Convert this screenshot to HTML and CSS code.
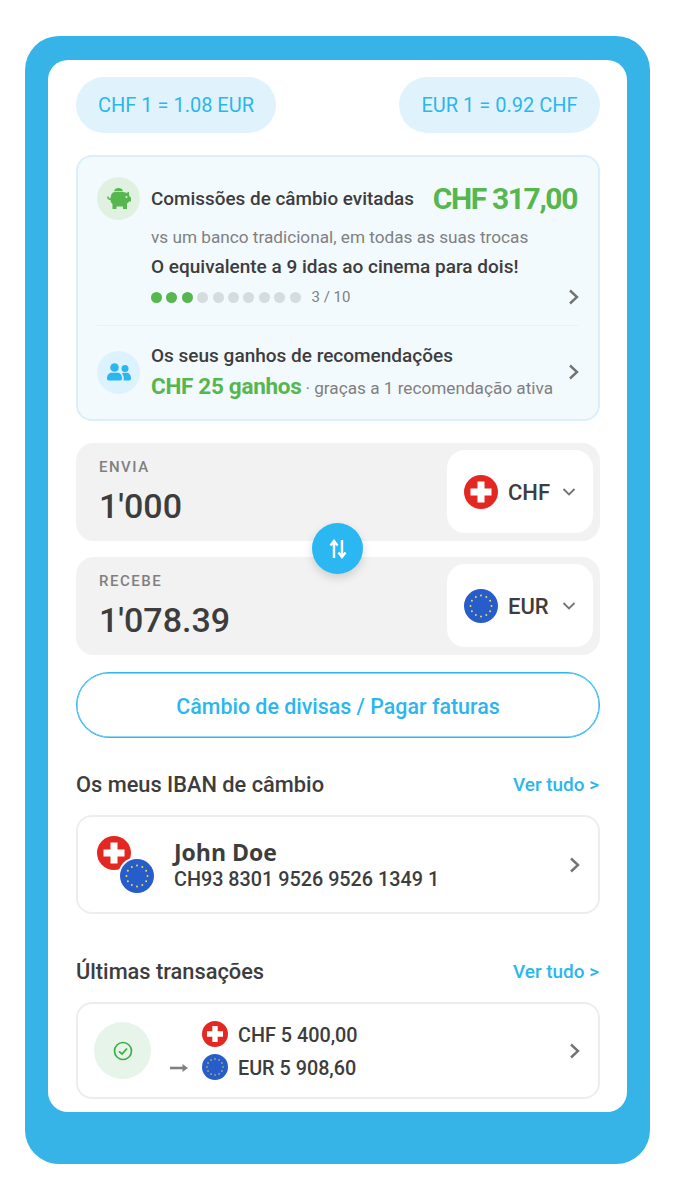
FILE: index.html
```html
<!DOCTYPE html>
<html lang="pt">
<head>
    <meta charset="UTF-8">
    <meta name="viewport" content="width=device-width, initial-scale=1.0">
    <title>Câmbio</title>
    <link rel="stylesheet" href="styles.css">
</head>
<body>
    <svg class="defs" width="0" height="0">
        <symbol id="flag-chf" viewBox="0 0 34 34">
            <circle cx="17" cy="17" r="17" fill="#e32822"/>
            <path d="M13.500 6.500h7v7h7v7h-7v7h-7v-7h-7v-7h7z" fill="#fff"/>
        </symbol>
        <symbol id="flag-eur" viewBox="0 0 34 34">
            <circle cx="17" cy="17" r="17" fill="#275ccb"/>
            <g fill="#ecdf3a">
                <circle cx="17" cy="6.500" r="1"/><circle cx="22.300" cy="7.900" r="1"/><circle cx="26.100" cy="11.800" r="1"/>
                <circle cx="27.500" cy="17" r="1"/><circle cx="26.100" cy="22.300" r="1"/><circle cx="22.300" cy="26.100" r="1"/>
                <circle cx="17" cy="27.500" r="1"/><circle cx="11.800" cy="26.100" r="1"/><circle cx="7.900" cy="22.300" r="1"/>
                <circle cx="6.500" cy="17" r="1"/><circle cx="7.900" cy="11.800" r="1"/><circle cx="11.800" cy="7.900" r="1"/>
            </g>
        </symbol>
        <symbol id="chevron" viewBox="0 0 14 18">
            <path d="M3 2.500 10 9l-7 6.500" fill="none" stroke="#737373" stroke-width="2.400"/>
        </symbol>
        <symbol id="chevron-down" viewBox="0 0 14 10">
            <path d="M1.500 2 7 7.500 12.500 2" fill="none" stroke="#737373" stroke-width="1.800"/>
        </symbol>
    </svg>

    <div class="frame">
        <div class="screen">
            <div class="rates">
                <div class="rate">CHF 1 = 1.08 EUR</div>
                <div class="rate wide">EUR 1 = 0.92 CHF</div>
            </div>

            <div class="summary">
                <div class="savings">
                    <div class="savings-head">
                        <div class="round-icon green">
                            <svg width="24" height="21" viewBox="0 0 24 21">
                                <path d="M7 3.300C7.500 1 9.300 0 11.500 0S15.500 1 16 3.300z" fill="#55b74e"/>
                                <path d="M8 4h8c1.300 0 2.400.3 3.300.9L22 3.800v3.500c.5.500.9 1.200 1.100 1.900H24v4.300h-1.800c-.5.800-1.200 1.500-2.200 2V21h-4v-2.500H9.500V21h-4v-5c-1.300-1.100-2-2.600-2-4.300C3.500 7 5 4 8 4z" fill="#55b74e"/>
                                <path d="M4 11C2 11.500.8 10.500 1 8.500" fill="none" stroke="#55b74e" stroke-width="1.600"/>
                                <circle cx="19.500" cy="9" r="1" fill="#e0f1e1"/>
                            </svg>
                        </div>
                        <div class="savings-title">Comissões de câmbio evitadas</div>
                        <div class="savings-amount">CHF 317,00</div>
                    </div>
                    <div class="savings-body">
                        <div class="muted">vs um banco tradicional, em todas as suas trocas</div>
                        <div class="equivalent">O equivalente a 9 idas ao cinema para dois!</div>
                        <div class="progress">
                            <div class="dots">
                                <span class="dot on"></span><span class="dot on"></span><span class="dot on"></span>
                                <span class="dot"></span><span class="dot"></span><span class="dot"></span><span class="dot"></span>
                                <span class="dot"></span><span class="dot"></span><span class="dot"></span>
                            </div>
                            <span class="count">3 / 10</span>
                            <svg class="chevron" width="14" height="18"><use href="#chevron"/></svg>
                        </div>
                    </div>
                </div>
                <div class="referral">
                    <div class="round-icon blue">
                        <svg width="24" height="18" viewBox="0 0 24 18">
                            <circle cx="7.500" cy="4.500" r="4.300" fill="#2bb6f0"/>
                            <circle cx="18" cy="5.500" r="3.500" fill="#2bb6f0"/>
                            <path d="M0 15.500C0 11.500 2.500 9.800 4.500 9.800h6c2.500 0 4.500 2 4.500 5.700 0 1.200-.7 2-1.800 2H1.800C.7 17.500 0 16.700 0 15.500z" fill="#2bb6f0"/>
                            <path d="M16.500 17.500c.3-.6.3-1.300.3-2 0-2-.7-3.800-1.900-5 .7-.5 1.500-.7 2.300-.7h2.300c2.400 0 4.500 2 4.500 5.400 0 1.400-.8 2.300-1.900 2.300z" fill="#2bb6f0"/>
                        </svg>
                    </div>
                    <div class="referral-text">
                        <div class="referral-title">Os seus ganhos de recomendações</div>
                        <div class="referral-line"><span class="referral-amount">CHF 25 ganhos</span> <span class="referral-note">· graças a 1 recomendação ativa</span></div>
                    </div>
                    <svg class="chevron" width="14" height="18"><use href="#chevron"/></svg>
                </div>
            </div>

            <div class="converter">
                <div class="amount-box">
                    <div class="amount-left">
                        <div class="amount-label">ENVIA</div>
                        <div class="amount-value">1'000</div>
                    </div>
                    <div class="currency">
                        <svg width="34" height="34"><use href="#flag-chf"/></svg>
                        <span class="currency-code">CHF</span>
                        <svg width="14" height="10"><use href="#chevron-down"/></svg>
                    </div>
                </div>
                <div class="amount-box">
                    <div class="amount-left">
                        <div class="amount-label">RECEBE</div>
                        <div class="amount-value">1'078.39</div>
                    </div>
                    <div class="currency">
                        <svg width="34" height="34"><use href="#flag-eur"/></svg>
                        <span class="currency-code">EUR</span>
                        <svg width="14" height="10"><use href="#chevron-down"/></svg>
                    </div>
                </div>
                <div class="swap">
                    <svg width="18" height="20" viewBox="0 0 18 20">
                        <path d="M5 19V3M1.500 6.500 5 2l3.500 4.500" fill="none" stroke="#fff" stroke-width="2.400"/>
                        <path d="M13 1v16M9.500 13.500 13 18l3.500-4.500" fill="none" stroke="#fff" stroke-width="2.400"/>
                    </svg>
                </div>
            </div>

            <div class="main-button">Câmbio de divisas / Pagar faturas</div>

            <div class="section-head first">
                <span class="section-title">Os meus IBAN de câmbio</span>
                <span class="see-all">Ver tudo &gt;</span>
            </div>
            <div class="list-card iban-card">
                <div class="flag-pair">
                    <svg class="flag-back" width="34" height="34"><use href="#flag-chf"/></svg>
                    <svg class="flag-front" width="38" height="38" viewBox="-2 -2 38 38">
                        <circle cx="17" cy="17" r="19" fill="#fff"/>
                        <use href="#flag-eur" width="34" height="34"/>
                    </svg>
                </div>
                <div class="iban-text">
                    <div class="iban-name">John Doe</div>
                    <div class="iban-number">CH93 8301 9526 9526 1349 1</div>
                </div>
                <svg class="chevron" width="14" height="18"><use href="#chevron"/></svg>
            </div>

            <div class="section-head second">
                <span class="section-title">Últimas transações</span>
                <span class="see-all">Ver tudo &gt;</span>
            </div>
            <div class="list-card tx-card">
                <div class="tx-status">
                    <svg width="20" height="20" viewBox="0 0 20 20">
                        <circle cx="10" cy="10" r="8.500" fill="none" stroke="#3fae49" stroke-width="1.700"/>
                        <path d="M6 10.300 9 13l5-5.500" fill="none" stroke="#3fae49" stroke-width="1.800"/>
                    </svg>
                </div>
                <svg class="tx-arrow" width="18" height="10" viewBox="0 0 18 10">
                    <path d="M0 5h13" stroke="#808080" stroke-width="2.600"/>
                    <path d="M12.500 1 18 5l-5.500 4z" fill="#808080"/>
                </svg>
                <div class="tx-rows">
                    <div class="tx-row">
                        <svg width="26" height="26"><use href="#flag-chf"/></svg>
                        <span class="tx-value">CHF 5 400,00</span>
                    </div>
                    <div class="tx-row">
                        <svg width="26" height="26"><use href="#flag-eur"/></svg>
                        <span class="tx-value">EUR 5 908,60</span>
                    </div>
                </div>
                <svg class="chevron" width="14" height="18"><use href="#chevron"/></svg>
            </div>
        </div>
    </div>
</body>
</html>
```

FILE: styles.css
```css
body {
    font-family: Roboto, Arial, sans-serif;
    margin: 0;
    padding: 0;
    background-color: #fff;
    color: #3d3d3d;
}
.defs {
    position: absolute;
}
.frame {
    margin: 36px 25px;
    padding: 24px 23px 52px;
    background-color: #36b4e8;
    border-radius: 34px;
}
.screen {
    background-color: #fff;
    border-radius: 20px;
    padding: 17px 27px 13px 28px;
}
.rates {
    display: flex;
    justify-content: space-between;
}
.rate {
    width: 200px;
    height: 56px;
    border-radius: 28px;
    background-color: #e0f3fc;
    color: #2bb6f0;
    font-size: 20px;
    display: flex;
    align-items: center;
    justify-content: center;
}
.rate.wide {
    width: 201px;
}
.summary {
    margin-top: 22px;
    height: 266px;
    box-sizing: border-box;
    background-color: #f3fafe;
    border: 2px solid #d8f0fb;
    border-radius: 16px;
    padding: 20px 20px 0 19px;
}
.summary .chevron {
    margin-right: -3px;
}
.savings {
    height: 148px;
    border-bottom: 1px solid #e8f2f7;
}
.savings-head {
    display: flex;
    align-items: center;
}
.round-icon {
    width: 43px;
    height: 43px;
    border-radius: 50%;
    flex-shrink: 0;
    display: flex;
    align-items: center;
    justify-content: center;
}
.round-icon.green {
    background-color: #e0f1e1;
}
.round-icon.blue {
    background-color: #dcf2fc;
}
.savings-title {
    margin-left: 11px;
    font-size: 18.900px;
    font-weight: 500;
    flex: 1;
    white-space: nowrap;
}
.savings-amount {
    font-size: 30px;
    font-weight: 700;
    color: #55b74e;
    letter-spacing: -1.400px;
    margin-right: 1px;
    white-space: nowrap;
}
.savings-body {
    margin-left: 54px;
    margin-top: 7px;
}
.muted {
    font-size: 17.200px;
    color: #808080;
    line-height: 20px;
    white-space: nowrap;
}
.equivalent {
    margin-top: 10px;
    font-size: 19px;
    font-weight: 500;
    line-height: 20px;
    white-space: nowrap;
}
.progress {
    display: flex;
    align-items: center;
    margin-top: 10px;
    height: 20px;
}
.dots {
    display: flex;
    gap: 4.400px;
}
.dot {
    width: 11px;
    height: 11px;
    border-radius: 50%;
    background-color: #d6dcde;
}
.dot.on {
    background-color: #55b74e;
}
.count {
    margin-left: 11px;
    font-size: 15px;
    color: #808080;
    flex: 1;
}
.chevron {
    flex-shrink: 0;
}
.referral {
    display: flex;
    align-items: center;
    margin-top: 16px;
}
.referral-text {
    margin-left: 11px;
    margin-top: 4px;
    flex: 1;
}
.referral-title {
    font-size: 19px;
    font-weight: 500;
    line-height: 20px;
}
.referral-line {
    margin-top: 7px;
    line-height: 26px;
    white-space: nowrap;
}
.referral-amount {
    font-size: 22.500px;
    font-weight: 700;
    color: #55b74e;
    letter-spacing: -0.300px;
}
.referral-note {
    font-size: 17.200px;
    color: #808080;
}
.converter {
    position: relative;
    margin-top: 22px;
    display: flex;
    flex-direction: column;
    gap: 16px;
}
.amount-box {
    height: 98px;
    box-sizing: border-box;
    background-color: #f2f2f2;
    border-radius: 18px;
    padding: 7px 7px 8px 23px;
    display: flex;
    justify-content: space-between;
}
.amount-label {
    margin-top: 9px;
    font-size: 15px;
    font-weight: 500;
    color: #808080;
    letter-spacing: 1.500px;
    line-height: 16px;
}
.amount-value {
    margin-top: 9px;
    font-size: 34px;
    font-weight: 500;
    line-height: 44px;
}
.currency {
    width: 146px;
    box-sizing: border-box;
    background-color: #fff;
    border-radius: 18px;
    padding-left: 17px;
    display: flex;
    align-items: center;
}
.currency-code {
    margin-left: 10px;
    margin-right: 10px;
    margin-top: 2px;
    width: 44px;
    font-size: 22px;
    font-weight: 500;
}
.swap {
    position: absolute;
    left: 236px;
    top: 80px;
    width: 51px;
    height: 51px;
    border-radius: 50%;
    background-color: #2bb7f1;
    box-shadow: 0 4px 10px rgba(0, 0, 0, 0.15);
    display: flex;
    align-items: center;
    justify-content: center;
}
.main-button {
    margin-top: 17px;
    height: 66px;
    box-sizing: border-box;
    border: 1px solid #2bb6f0;
    box-shadow: inset 0 0 0 0.500px #2bb6f0;
    border-radius: 33px;
    color: #2bb6f0;
    font-size: 21.400px;
    font-weight: 500;
    padding-top: 2px;
    display: flex;
    align-items: center;
    justify-content: center;
}
.section-head {
    display: flex;
    justify-content: space-between;
    align-items: center;
    height: 24px;
}
.section-head.first {
    margin-top: 35px;
}
.section-head.second {
    margin-top: 46px;
}
.section-title {
    font-size: 21.800px;
    font-weight: 500;
    margin-top: -1px;
}
.see-all {
    font-size: 18.900px;
    font-weight: 500;
    color: #2bb6f0;
    margin-top: -1px;
    margin-right: 1px;
}
.list-card {
    box-sizing: border-box;
    border: 2px solid #ebeeef;
    border-radius: 16px;
    background-color: #fff;
    display: flex;
    align-items: center;
    padding-right: 16px;
}
.iban-card {
    margin-top: 18px;
    height: 99px;
    padding-left: 19px;
}
.flag-pair {
    position: relative;
    width: 57px;
    height: 57px;
    flex-shrink: 0;
}
.flag-back {
    display: block;
}
.flag-front {
    position: absolute;
    left: 21px;
    top: 21px;
}
.iban-text {
    margin-left: 20px;
    padding-top: 1px;
    flex: 1;
}
.iban-name {
    font-family: "Open Sans", sans-serif;
    font-size: 23px;
    font-weight: 700;
    line-height: 28px;
}
.iban-number {
    margin-top: 1px;
    font-size: 19.800px;
    font-weight: 500;
    line-height: 26px;
    white-space: nowrap;
}
.tx-card {
    margin-top: 18px;
    height: 97px;
    padding-left: 16px;
}
.tx-status {
    width: 57px;
    height: 57px;
    border-radius: 50%;
    background-color: #e7f4ea;
    flex-shrink: 0;
    display: flex;
    align-items: center;
    justify-content: center;
}
.tx-arrow {
    margin-left: 19px;
    margin-top: 35px;
    flex-shrink: 0;
}
.tx-rows {
    margin-left: 14px;
    flex: 1;
    display: flex;
    flex-direction: column;
    gap: 7px;
}
.tx-row {
    display: flex;
    align-items: center;
    gap: 10px;
    font-size: 19.800px;
    font-weight: 500;
}
.tx-value {
    margin-top: 2px;
}
```
